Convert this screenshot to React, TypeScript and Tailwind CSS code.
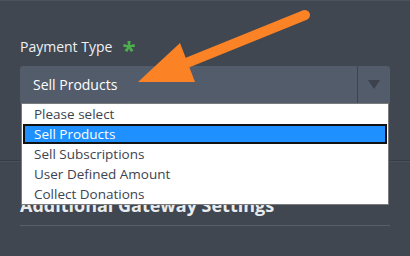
import React from 'react';

const options = ['Please select', 'Sell Products', 'Sell Subscriptions', 'User Defined Amount', 'Collect Donations'];

const App: React.FC = () => {
  return (
    <div
      className="relative w-[410px] h-[256px] overflow-hidden bg-[#404751] border-t border-[#4b525c]"
      style={{ fontFamily: '"Open Sans", "Noto Sans", sans-serif' }}
    >
      <div className="px-5 pt-[35px]">
        <div className="flex items-center h-[20px] text-[14px] text-[#eef0f3]">
          <span>Payment Type</span>
          <span className="ml-[10px] text-[24px] leading-none text-[#4cae4c] font-bold mt-[8px]">*</span>
        </div>
        <div className="mt-[10px] flex h-[37px] rounded-t-[3px] bg-[#535c6b]">
          <div className="flex-1 flex items-center pl-[13px] text-[14px] text-white">Sell Products</div>
          <div className="w-[1px] bg-[#3c4451]" />
          <div className="w-[32px] flex items-center justify-center">
            <svg width="12" height="9" viewBox="0 0 12 9">
              <path d="M0 0 L12 0 L6 9 Z" fill="#3b424e" />
            </svg>
          </div>
        </div>
      </div>

      <div className="mt-[57px] border-t border-[#363c45] border-b border-b-[#4a515b]" />

      <div className="px-5">
        <h2 className="mt-[31px] text-[18px] leading-[24px] font-bold text-[#e9ecef]">Additional Gateway Settings</h2>
        <div className="mt-[8px] h-px bg-[#56606d]" />
      </div>

      <ul className="absolute left-[21px] top-[102px] w-[368px] bg-white border border-[#7b7b7b] text-[13.5px]">
        {options.map((o) =>
          o === 'Sell Products' ? (
            <li
              key={o}
              className="h-[20px] flex items-center pl-[11px] bg-[#1e90ff] text-white outline-2 outline-[#111] -outline-offset-2 mx-px"
            >
              {o}
            </li>
          ) : (
            <li key={o} className="h-[20px] flex items-center pl-[12px] text-[#3c4350]">
              {o}
            </li>
          )
        )}
      </ul>

      <svg className="absolute left-0 top-0 pointer-events-none" width="410" height="256">
        <line x1="305" y1="14" x2="184" y2="63" stroke="#fc8226" strokeWidth="10" strokeLinecap="round" />
        <path d="M138 81 L180 42 L195 81 Z" fill="#fc8226" />
      </svg>
    </div>
  );
};

export default App;
